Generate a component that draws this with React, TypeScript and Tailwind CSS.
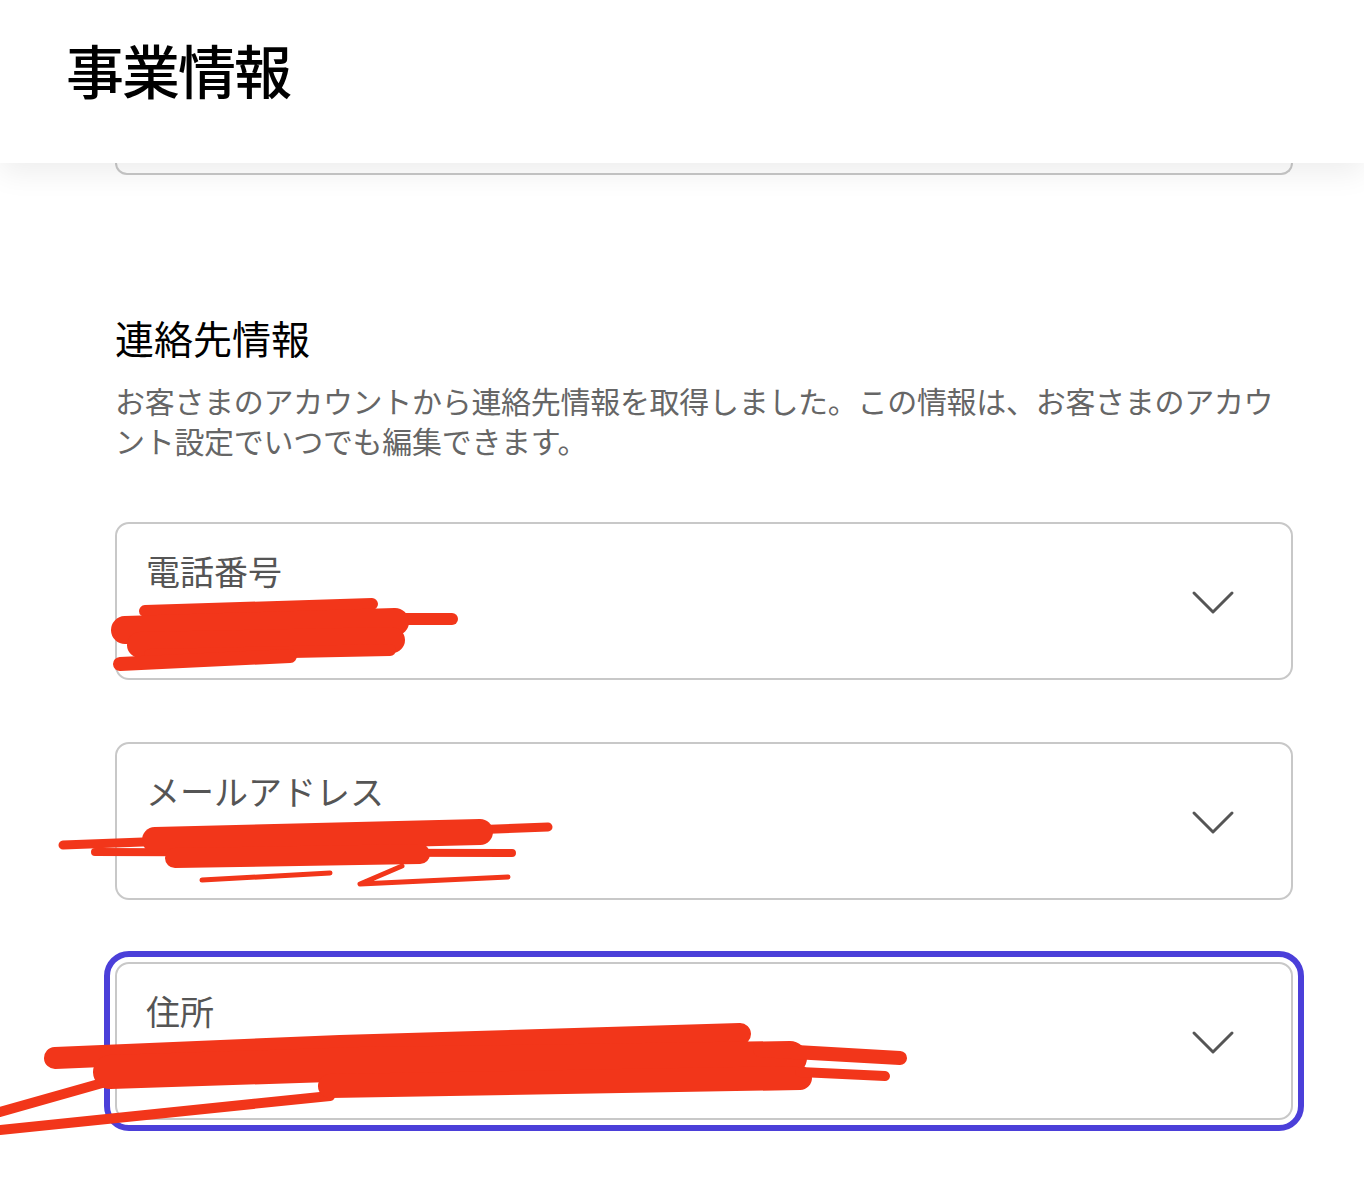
const fields = [
  { label: '電話番号', focused: false },
  { label: 'メールアドレス', focused: false },
  { label: '住所', focused: true },
];

function Chevron() {
  return (
    <svg width="44" height="26" viewBox="0 0 44 26" fill="none" className="mt-[4px]">
      <path d="M3 3 L22 22 L41 3" stroke="#555555" strokeWidth="3" strokeLinecap="round" strokeLinejoin="round" />
    </svg>
  );
}

function Scribbles() {
  const red = '#f2361a';
  return (
    <svg
      className="pointer-events-none absolute left-0 top-0"
      width="1364"
      height="1190"
      viewBox="0 0 1364 1190"
      fill="none"
      stroke={red}
      strokeLinecap="round"
      strokeLinejoin="round"
    >
      {/* phone */}
      <path d="M145 611 L372 604" strokeWidth="12" />
      <path d="M300 619 L452 619" strokeWidth="12" />
      <path d="M125 630 L395 622" strokeWidth="28" />
      <path d="M140 645 L392 640" strokeWidth="26" />
      <path d="M150 655 L390 650" strokeWidth="12" />
      <path d="M120 664 L290 656" strokeWidth="14" />
      {/* email */}
      <path d="M63 845 L548 827" strokeWidth="9" />
      <path d="M95 852 L512 853" strokeWidth="8" />
      <path d="M155 840 L480 832" strokeWidth="26" />
      <path d="M175 858 L420 854" strokeWidth="20" />
      <path d="M202 880 L330 873" strokeWidth="5" />
      <path d="M402 866 L360 884 L508 877" strokeWidth="5" />
      {/* address */}
      <path d="M0 1112 L120 1078" strokeWidth="10" />
      <path d="M0 1130 L330 1096" strokeWidth="10" />
      <path d="M55 1058 L340 1046 L740 1034" strokeWidth="22" />
      <path d="M110 1072 L360 1064 L790 1058" strokeWidth="34" />
      <path d="M330 1086 L800 1078" strokeWidth="24" />
      <path d="M760 1050 L900 1058" strokeWidth="14" />
      <path d="M800 1072 L885 1076" strokeWidth="10" />
    </svg>
  );
}

export default function App() {
  return (
    <div
      className="relative h-[1190px] overflow-hidden bg-white"
      style={{ fontFamily: '"Noto Sans CJK JP", "Noto Sans", sans-serif' }}
    >
      {/* Header */}
      <div className="relative z-10 h-[163px] bg-white pl-[66px] pt-[40px] shadow-[0_10px_28px_rgba(0,0,0,0.07)]">
        <h1 className="text-[58px] font-medium leading-none tracking-[-2px] text-black">事業情報</h1>
      </div>

      <div className="ml-[115px] mr-[71px]">
        {/* previous card, scrolled under header */}
        <div className="h-[12px] rounded-b-[14px] border-x-2 border-b-2 border-[#c8c8c8]" />

        <h2 className="mt-[139px] text-[39px] leading-[47px] text-black">連絡先情報</h2>
        <p className="mt-[19px] text-[30px] leading-[40px] tracking-[-0.3px] text-[#666666]">
          お客さまのアカウントから連絡先情報を取得しました。この情報は、お客さまのアカウント設定でいつでも編集できます。
        </p>

        <div className="mt-[62px] flex flex-col gap-[62px]">
          {fields.map((f) => (
            <div
              key={f.label}
              className={
                'flex h-[158px] items-center justify-between rounded-[14px] border-2 border-[#c8c8c8] bg-white pl-[29px] pr-[56px] ' +
                (f.focused ? 'outline-[6px] outline-offset-[5px] outline-[#4b3fd9] outline-solid' : '')
              }
            >
              <div className="self-start pt-[26px] text-[34px] leading-[41px] text-[#555555]">{f.label}</div>
              <Chevron />
            </div>
          ))}
        </div>
      </div>

      <Scribbles />
    </div>
  );
}
